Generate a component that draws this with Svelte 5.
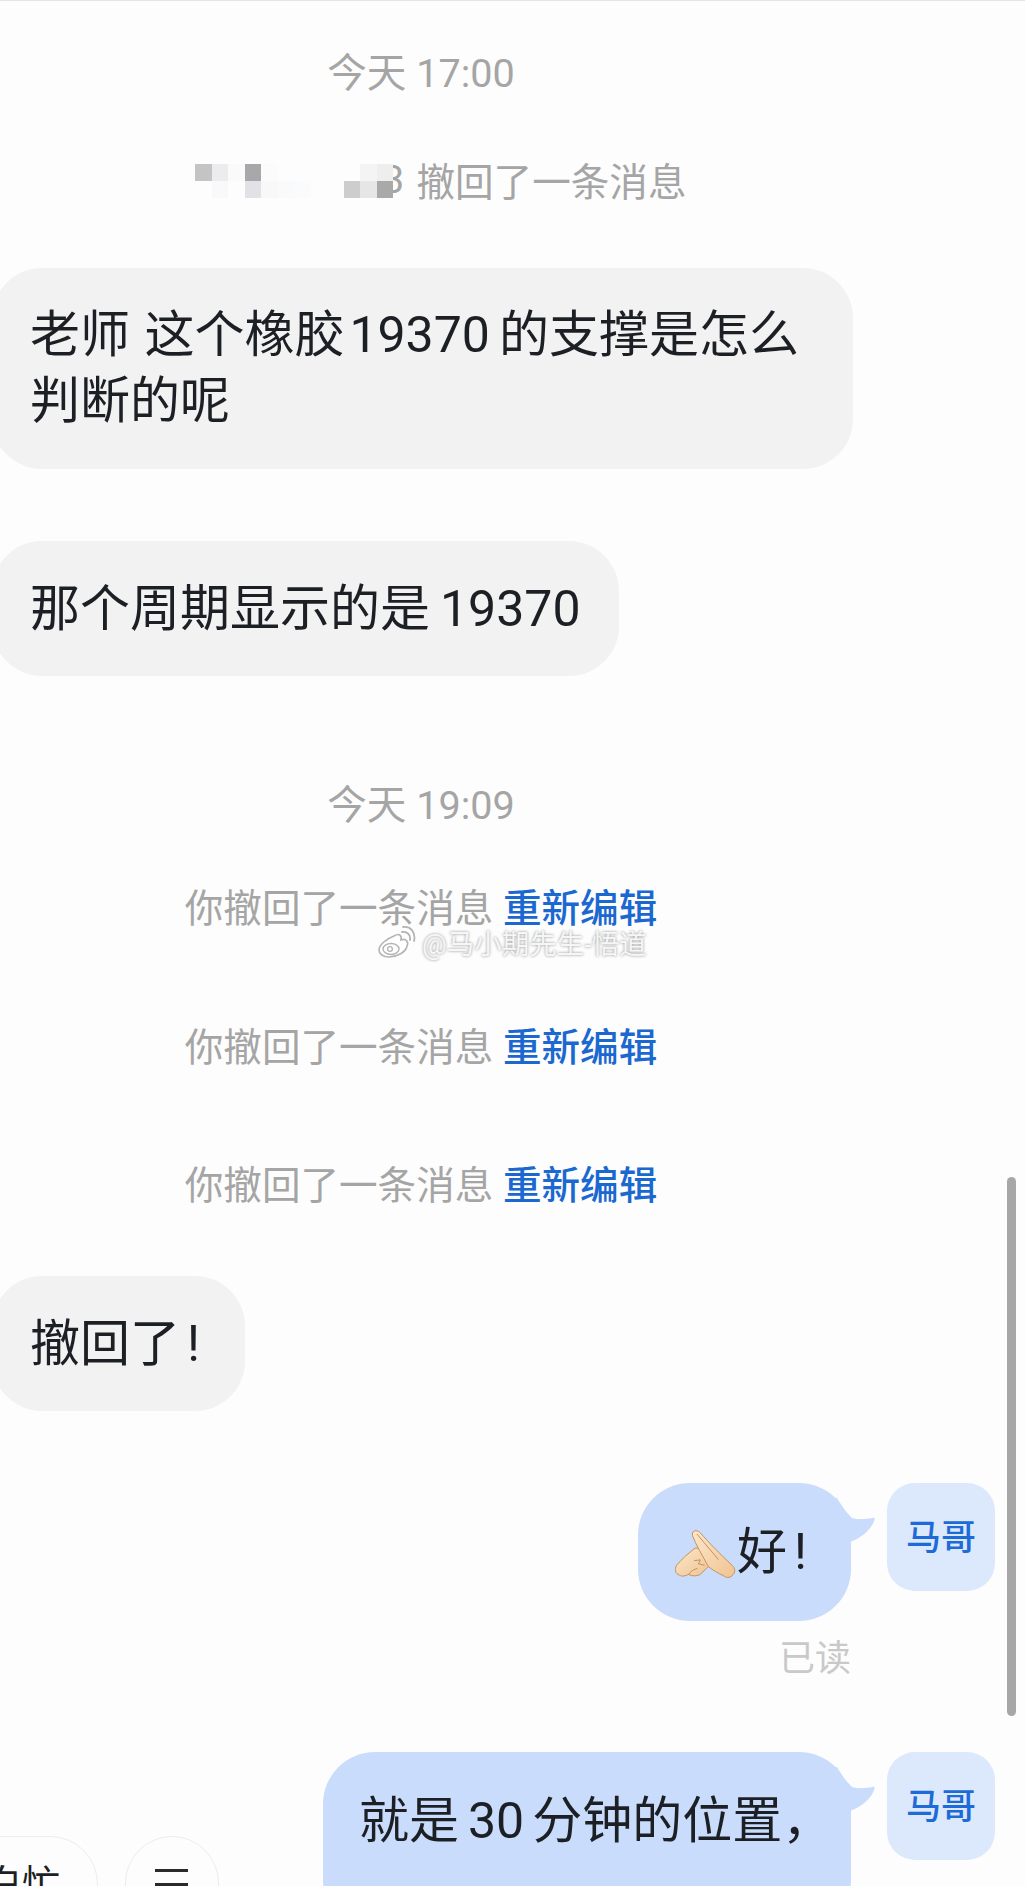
<script>
	// pixelated name in the recall notice: [column, row, colour]
	const mosaic = [
		[0, 0, '#c4c4c4'], [1, 0, '#ececee'], [2, 0, '#fafafa'], [3, 0, '#a8a8aa'], [4, 0, '#fbfbfb'],
		[1, 1, '#f9f9fb'], [3, 1, '#e2e2e6'], [4, 1, '#f8f8f8'], [5, 1, '#fafafa'], [6, 1, '#fafbfd'],
		[10, 0, '#f4f4f5'], [11, 0, '#eeeeef'],
		[9, 1, '#cdcdcd'], [10, 1, '#e6e6e6'], [11, 1, '#a9a9a9']
	];

	const recalled = [1, 2, 3];
</script>

<div class="chat">
	<div class="notice stamp">今天 17:00</div>

	<div class="notice recall-other">
		<span class="blurred" aria-hidden="true">
			<b>3</b>
			{#each mosaic as [col, row, colour]}
				<i style="grid-area: {row + 1} / {col + 1}; background: {colour}"></i>
			{/each}
		</span>
		<span>撤回了一条消息</span>
	</div>

	<div class="bubble them first">老师 这个橡胶<span class="num">19370</span>的支撑是怎么判断的呢</div>
	<div class="bubble them second">那个周期显示的是<span class="num">19370</span></div>

	<div class="notice stamp time-b">今天 19:09</div>

	{#each recalled as n}
		<div class="notice mine n{n}">你撤回了一条消息 <a href="#edit">重新编辑</a></div>
	{/each}

	<div class="bubble them third">撤回了<span class="bang">!</span></div>

	<div class="out good">
		<div class="bubble me">
			<svg class="hands" viewBox="45 50 185 152" aria-hidden="true">
				<defs>
					<linearGradient id="skin" x1="0" y1="0" x2="1" y2="1">
						<stop offset="0" stop-color="#fde7ca"></stop>
						<stop offset="1" stop-color="#efc493"></stop>
					</linearGradient>
				</defs>
				<path d="M106 108 C88 122 66 140 50 160 C42 172 46 186 58 190 C66 196 78 192 86 188 C96 194 112 194 122 188 L150 160 L124 108 Z" fill="url(#skin)" stroke="#c48f5c" stroke-width="3"></path>
				<path d="M98 62 C102 52 114 54 122 62 C150 94 178 122 218 160 C230 170 228 184 218 192 C210 200 200 198 192 192 C176 184 160 176 146 164 C128 130 108 98 98 70 Z" fill="url(#skin)" stroke="#c48f5c" stroke-width="3"></path>
				<path d="M112 66 L176 142 M104 146 L122 144 L116 156 L134 160 M86 188 C92 178 104 172 112 170" fill="none" stroke="#c48f5c" stroke-width="3" stroke-linecap="round"></path>
			</svg>
			<span>好</span><span class="bang">!</span>
			<svg class="tail" viewBox="0 0 47 56" aria-hidden="true">
				<path d="M9 8 C12 14 16 20 24 28 C30 30 40 29 44 28 C47 27 47 29 46 31 C44 38 34 48 22 52 L0 52 L0 8 Z" fill="#c9dcfb"></path>
			</svg>
		</div>
		<div class="avatar">马哥</div>
	</div>
	<div class="read">已读</div>

	<div class="out last">
		<div class="bubble me">
			就是<span class="num">30</span>分钟的位置，
			<svg class="tail" viewBox="0 0 47 56" aria-hidden="true">
				<path d="M9 8 C12 14 16 20 24 28 C30 30 40 29 44 28 C47 27 47 29 46 31 C44 38 34 48 22 52 L0 52 L0 8 Z" fill="#c9dcfb"></path>
			</svg>
		</div>
		<div class="avatar">马哥</div>
	</div>

	<div class="watermark" aria-hidden="true">
		<svg viewBox="0 0 38 32">
			<path d="M16 10 C21 7 24 9 23 14 C28 12 31 16 29 20 C28 26 19 31 11 31 C5 31 1 28 1 24 C1 19 8 13 16 10 Z" fill="#fff" stroke="#b4b4b4" stroke-width="1.6"></path>
			<ellipse cx="13" cy="23" rx="8" ry="5.5" fill="none" stroke="#b4b4b4" stroke-width="1.4"></ellipse>
			<circle cx="12" cy="23" r="2.4" fill="none" stroke="#b4b4b4" stroke-width="1.3"></circle>
			<path d="M24 6 C29 5 33 9 32 14 M25 1 C33 0 38 7 36 15" fill="none" stroke="#b4b4b4" stroke-width="1.8" stroke-linecap="round"></path>
		</svg>
		<span>@马小期先生-悟道</span>
	</div>

	<div class="scrollbar"></div>

	<div class="quick">
		<div class="chip text">白忙</div>
		<div class="chip menu"><i></i><i></i></div>
	</div>
</div>

<style>
	:global(body) {
		margin: 0;
		background: #fdfdfd;
	}

	.chat {
		position: relative;
		box-sizing: border-box;
		display: flex;
		flex-direction: column;
		height: 1886px;
		padding-top: 46px;
		overflow: hidden;
		border-top: 1px solid #e4e5e8;
		background: #fdfdfd;
		color: #1c1f24;
		font-family: Roboto, 'Noto Sans CJK SC', sans-serif;
	}

	.notice {
		height: 54px;
		padding-right: 183px;
		color: #a5a5a5;
		font-size: 38.6px;
		line-height: 54px;
		text-align: center;
		white-space: nowrap;
	}

	.stamp {
		font-size: 39.6px;
	}

	.notice a {
		color: #1a68d0;
		font-weight: 500;
		text-decoration: none;
	}

	.recall-other {
		display: flex;
		justify-content: center;
		margin-top: 55px;
	}

	.blurred {
		position: relative;
		display: grid;
		width: 261px;
		height: 34px;
		margin-top: 8px;
		padding-left: 40px;
		box-sizing: border-box;
		grid-template-columns: repeat(12, 16.5px);
		grid-template-rows: 17px 17px;
	}

	.blurred b {
		position: absolute;
		top: -11px;
		left: 227px;
		font-weight: 400;
		color: #a5a5a5;
	}

	.blurred i {
		position: relative;
		display: block;
	}

	.bubble {
		position: relative;
		box-sizing: border-box;
		font-size: 50px;
		line-height: 66px;
	}

	.num {
		margin: 0 5px;
	}

	.bang {
		margin: 0 6px 0 7px;
	}

	.them {
		width: fit-content;
		margin-left: -8px;
		padding: 34px 39px 34px 38px;
		border-radius: 50px;
		background: #f2f2f3;
	}

	.first {
		width: 861px;
		margin-top: 58px;
		padding-bottom: 35px;
		word-spacing: 2px;
	}

	.first .num {
		margin: 0 9px 0 5px;
	}

	.second {
		margin-top: 72px;
		padding: 35px 38px 34px 38px;
	}

	.second .num {
		margin: 0 0 0 10px;
	}

	.third {
		margin-top: 63px;
		padding-top: 35px;
	}

	.time-b {
		margin-top: 103px;
	}

	.n1 {
		margin-top: 49px;
	}

	.n2 {
		margin-top: 85px;
	}

	.n3 {
		margin-top: 84px;
	}

	.out {
		display: flex;
		justify-content: flex-end;
		align-items: flex-start;
		gap: 36px;
		padding-right: 30px;
	}

	.good {
		margin-top: 72px;
	}

	.me {
		border-radius: 52px;
		background: #c9dcfb;
	}

	.good .me {
		display: flex;
		align-items: center;
		width: 213px;
		height: 138px;
		padding: 0 0 0 37px;
	}

	.last {
		margin-top: 70px;
	}

	.last .me {
		width: 528px;
		height: 180px;
		padding: 36px 0 0 36px;
		white-space: nowrap;
	}

	.last .num {
		margin: 0 8px 0 9px;
	}

	.hands {
		flex: none;
		width: 61px;
		height: 50px;
		margin: 4px 1px 0 0;
	}

	.tail {
		position: absolute;
		top: 7px;
		right: -24px;
		width: 47px;
		height: 56px;
	}

	.avatar {
		display: grid;
		flex: none;
		box-sizing: border-box;
		width: 108px;
		height: 108px;
		padding-bottom: 6px;
		place-items: center;
		border-radius: 28px;
		background: #dce8fc;
		color: #1d6bd6;
		font-size: 35px;
		font-weight: 500;
	}

	.read {
		align-self: flex-end;
		margin: 15px 174px 0 0;
		color: #c9c9c9;
		font-size: 36px;
		line-height: 46px;
	}

	.watermark {
		position: absolute;
		top: 921px;
		left: 378px;
		display: flex;
		align-items: center;
		gap: 6px;
		color: #f6f6f6;
		font-size: 27.5px;
		text-shadow: 0 0 3px #8c8c8c;
	}

	.watermark svg {
		width: 38px;
		height: 32px;
	}

	.scrollbar {
		position: absolute;
		top: 1176px;
		left: 1007px;
		width: 9px;
		height: 539px;
		border-radius: 5px;
		background: #a7a7a7;
	}

	.quick {
		position: absolute;
		top: 1835px;
		left: -60px;
		display: flex;
		gap: 27px;
	}

	.chip {
		box-sizing: border-box;
		height: 100px;
		border: 1px solid #ececec;
		border-radius: 48px;
		background: #fdfdfd;
	}

	.text {
		width: 158px;
		padding: 20px 0 0 43px;
		font-size: 38px;
		line-height: 54px;
	}

	.menu {
		display: flex;
		flex-direction: column;
		gap: 11px;
		width: 94px;
		padding: 32px 0 0 29px;
	}

	.menu i {
		display: block;
		width: 33px;
		height: 3px;
		background: #2a2a2a;
	}
</style>
